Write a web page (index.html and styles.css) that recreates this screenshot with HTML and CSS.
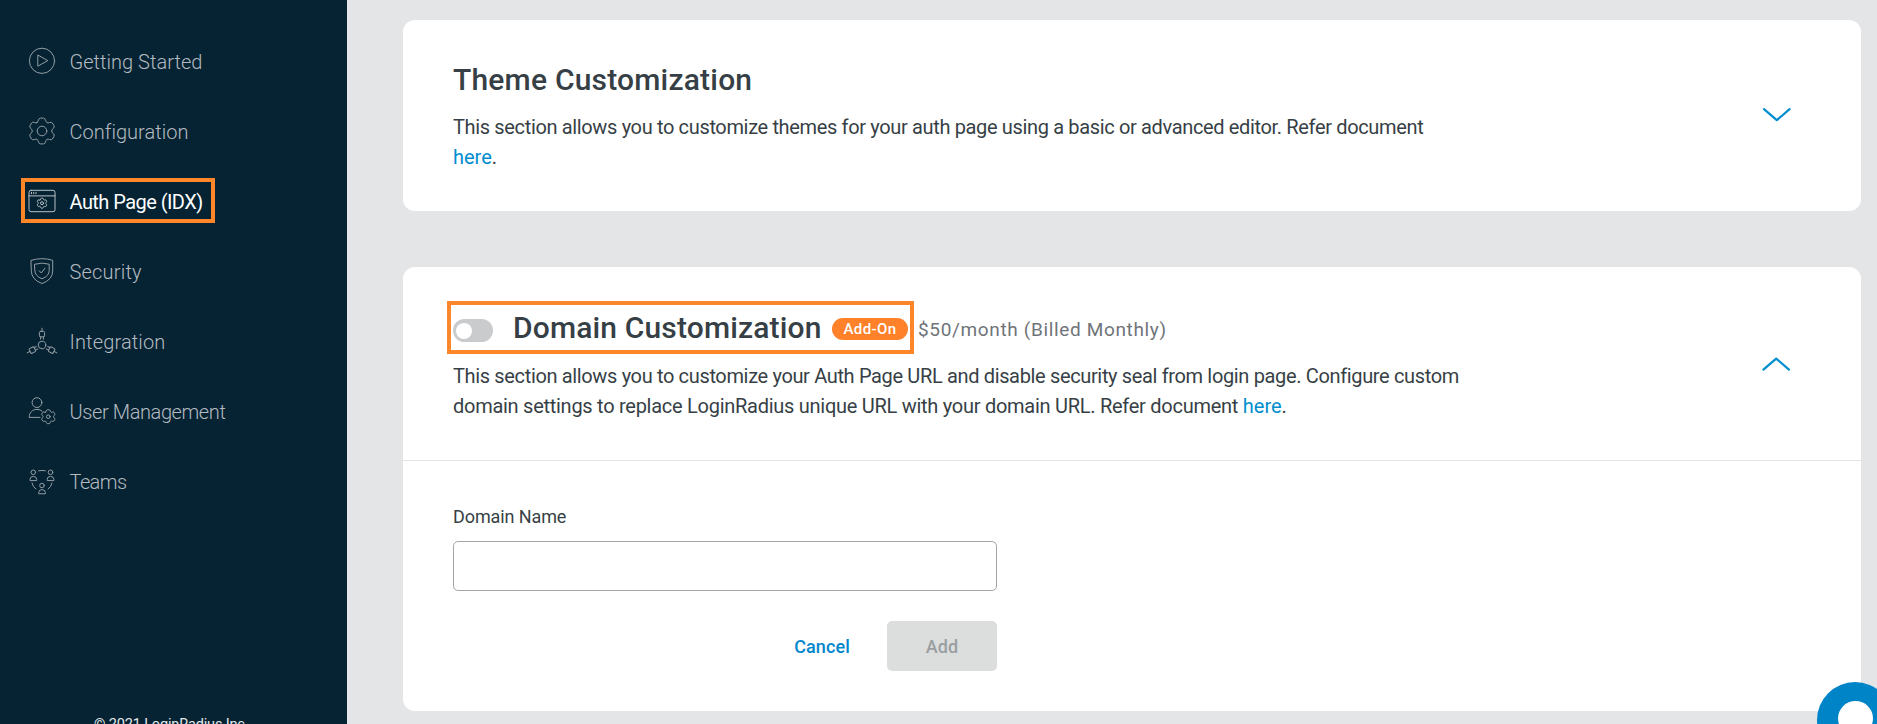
FILE: index.html
```html
<!DOCTYPE html>
<html lang="en">
<head>
<meta charset="utf-8">
<title>Auth Page (IDX)</title>
<link rel="stylesheet" href="styles.css">
</head>
<body>
<svg class="defs" width="0" height="0" aria-hidden="true">
  <symbol id="gear" viewBox="-13 -13 26 26" overflow="visible">
    <path vector-effect="non-scaling-stroke" d="M-5-8.3Q-4.1-8.9-3.6-10.8Q-3-12.9-1.6-12.9H1.6Q3-12.9 3.6-10.8Q4.1-8.9 5-8.3Q6-7.8 7.6-8.5Q9.7-9.3 10.4-8L12-5.3Q12.7-4 11.2-2.5Q9.7-1.1 9.7 0Q9.7 1.1 11.2 2.5Q12.7 4 12 5.3L10.4 8Q9.7 9.3 7.6 8.5Q6 7.8 5 8.3Q4.1 8.9 3.6 10.8Q3 12.9 1.6 12.9H-1.6Q-3 12.9-3.6 10.8Q-4.1 8.9-5 8.3Q-6 7.8-7.6 8.5Q-9.7 9.3-10.4 8L-12 5.3Q-12.7 4-11.2 2.5Q-9.7 1.1-9.7 0Q-9.7-1.1-11.2-2.5Q-12.7-4-12-5.3L-10.4-8Q-9.7-9.3-7.6-8.5Q-6-7.8-5-8.3Z"/>
  </symbol>
</svg>
<div class="app">
  <aside class="sidebar">
    <nav class="nav">
      <a class="nav-item"><svg class="icon" viewBox="0 0 32 32"><circle cx="16" cy="15.8" r="12.6"/><path d="M11.8 10.4v10.8l9.7-5.4z"/></svg><span class="t-start">Getting Started</span></a>
      <a class="nav-item"><svg class="icon" viewBox="0 0 32 32"><use href="#gear" x="3" y="3" width="26" height="26"/><circle cx="16" cy="16" r="4.8"/></svg><span class="t-conf">Configuration</span></a>
      <a class="nav-item active"><svg class="icon" viewBox="0 0 32 32"><rect x="3" y="5.3" width="26" height="21.4" rx="2"/><path d="M3 10.9h26M5.5 7.3v1.4M7.7 7.3v1.4M10 7.3v1.4"/><use href="#gear" x="11" y="13.2" width="10" height="10"/><circle cx="16" cy="18.2" r="1.5"/></svg><span class="t-auth">Auth Page (IDX)</span></a>
      <a class="nav-item"><svg class="icon" viewBox="0 0 32 32"><path d="M5.3 5.3Q16 2 26.7 5.3V16Q26.7 24.5 16 28.6Q5.3 24.5 5.3 16Z"/><path d="M8.8 9.2Q16 7 23.2 9.2V15.5Q23.2 21 16 23.8Q8.8 21 8.8 15.5Z"/><path d="M13.2 15.8l2.1 2.2 3.6-4.8"/></svg><span class="t-sec">Security</span></a>
      <a class="nav-item"><svg class="icon" viewBox="0 0 32 32"><circle cx="16" cy="20" r="3.8"/><g id="plug"><rect x="13.4" y="6.4" width="5.2" height="5.4" rx="1"/><path d="M16 3.2v3.2M14.6 11.8v2.4M17.4 11.8v2.4"/></g><use href="#plug" transform="rotate(118 16 20)"/><use href="#plug" transform="rotate(-118 16 20)"/></svg><span class="t-int">Integration</span></a>
      <a class="nav-item"><svg class="icon" viewBox="0 0 32 32"><circle cx="11" cy="7.6" r="4.9"/><path d="M14 22.4H3.2C3.2 17.6 6.4 14.4 11 14.4q3 0 5 1.6"/><use href="#gear" x="15.3" y="14.7" width="14" height="14"/><circle cx="22.3" cy="21.7" r="1.8"/></svg><span class="t-user">User Management</span></a>
      <a class="nav-item"><svg class="icon" viewBox="0 0 32 32"><g id="person"><circle cx="7.3" cy="7.3" r="2.3"/><path d="M4 15.2v-.8q0-3 3.3-3t3.4 3v.8z"/></g><use href="#person" x="17.2"/><use href="#person" x="8.7" y="13.2"/><path d="M12.6 5.8q3.4-.8 6.8 0M6 18q1 4 3.8 6M26 18q-1 4-3.8 6"/></svg><span class="t-team">Teams</span></a>
    </nav>
    <div class="copyright">© 2021 LoginRadius Inc.</div>
    <div class="outline outline-nav"></div>
  </aside>
  <main class="main">
    <section class="card card-theme">
      <div class="intro">
        <h2 class="title title-theme">Theme Customization</h2>
        <p class="desc desc-theme">This section allows you to customize themes for your auth page using a basic or advanced editor. Refer document<br><a class="link">here</a>.</p>
      </div>
      <svg class="chevron chevron-down" viewBox="0 0 28 14"><path d="M1 1.2l12.8 11L26.6 1.2"/></svg>
    </section>
    <section class="card">
      <header class="card-head">
        <div class="intro">
          <div class="title-row">
            <span class="toggle"><span class="knob"></span></span>
            <h2 class="title title-domain">Domain Customization</h2>
            <span class="badge">Add-On</span>
            <span class="price">$50/month (Billed Monthly)</span>
            <span class="outline outline-title"></span>
          </div>
          <p class="desc desc-domain"><span class="line-a">This section allows you to customize your Auth Page URL and disable security seal from login page. Configure custom</span><br><span class="line-b">domain settings to replace LoginRadius unique URL with your domain URL. Refer document <a class="link">here</a>.</span></p>
        </div>
        <svg class="chevron chevron-up" viewBox="0 0 28 14"><path d="M.4 12.6L13.2 1.6 26 12.6"/></svg>
      </header>
      <form class="form">
        <label class="label" for="domain">Domain Name</label>
        <input class="input" id="domain" type="text">
        <div class="actions">
          <button class="btn-cancel" type="button">Cancel</button>
          <button class="btn-add" type="button" disabled>Add</button>
        </div>
      </form>
    </section>
  </main>
  <div class="chat"><span class="chat-dot"></span></div>
</div>
</body>
</html>
```
FILE: styles.css
```css
* { box-sizing: border-box; }
html, body { margin: 0; height: 724px; overflow: hidden; }
body { font-family: Roboto, "Liberation Sans", sans-serif; color: #373f46; background: #e4e5e7; }
h2, p { margin: 0; }
.defs { position: absolute; }
.app { position: relative; display: flex; width: 1877px; height: 724px; overflow: hidden; }

.sidebar { position: relative; display: flex; flex-direction: column; flex: none; width: 347px; padding-top: 27px; background: #052333; }
.nav-item { display: flex; align-items: center; gap: 11.5px; height: 70px; padding-left: 26px; font-size: 20px; line-height: 30px; font-weight: 300; color: #b4bac0; white-space: nowrap; }
.nav-item.active { color: #fff; font-weight: 400; }
.t-start, .t-conf { letter-spacing: 0.03px; }
.t-int { letter-spacing: 0.14px; }
.t-auth { letter-spacing: -0.55px; }
.t-sec { letter-spacing: 0.2px; }
.t-user { letter-spacing: -0.4px; }
.t-team { letter-spacing: -0.6px; }
.icon { flex: none; width: 32px; height: 32px; margin-top: -2px; fill: none; stroke: #939da4; stroke-width: 1; stroke-linecap: round; stroke-linejoin: round; overflow: visible; }
.active .icon { stroke: #b9c1c6; }
.copyright { margin: 198px 0 0 94px; font-size: 14.5px; line-height: 20px; letter-spacing: -0.15px; color: #e4e8ea; white-space: nowrap; }
.outline { position: absolute; border: 4px solid #ff8629; pointer-events: none; }
.outline-nav { left: 21px; top: 178px; width: 194px; height: 45px; }

.main { display: flex; flex-direction: column; gap: 56px; flex: 1; padding: 20px 16px 0 56px; }
.card { flex: none; height: 444px; border-radius: 12px; background: #fff; }
.card-theme { display: flex; justify-content: space-between; height: 191px; padding: 42px 70px 0 50px; }
.card-head { display: flex; justify-content: space-between; height: 194px; padding: 43px 70px 0 50px; border-bottom: 1px solid #e2e4e6; }
.intro { white-space: nowrap; }
.title { font-size: 30px; line-height: 36px; font-weight: 500; letter-spacing: 0.2px; }
.desc { margin-top: 14px; font-size: 20px; line-height: 30px; letter-spacing: -0.35px; }
.desc-domain { margin-top: 15px; }
.line-b { letter-spacing: -0.27px; }
.link { color: #008ecf; letter-spacing: 0; }
.chevron { flex: none; width: 28px; height: 14px; fill: none; stroke: #008ecf; stroke-width: 2.2; stroke-linecap: round; stroke-linejoin: round; overflow: visible; }
.chevron-down { margin-top: 46px; }
.chevron-up { margin-top: 47px; }

.title-row { position: relative; display: flex; align-items: center; height: 36px; }
.toggle { display: flex; align-items: center; width: 40px; height: 23px; margin: 5px 20px 0 0; padding-left: 3px; border-radius: 12px; background: #cacbcd; }
.knob { width: 16px; height: 16px; border-radius: 50%; background: #fff; }
.title-domain { width: 319px; letter-spacing: 0.15px; }
.badge { width: 76px; height: 22px; margin-top: 2px; border-radius: 11px; background: #ff8129; color: #fff; font-size: 15px; line-height: 23px; font-weight: 500; letter-spacing: 0.4px; text-align: center; }
.price { margin: 4px 0 0 10px; font-size: 19px; line-height: 30px; letter-spacing: 0.65px; color: #6f7479; }
.outline-title { left: -6px; top: -9px; width: 467px; height: 53px; }

.form { width: 594px; padding: 44px 0 0 50px; }
.label { display: block; font-size: 18px; line-height: 24px; letter-spacing: -0.1px; }
.input { display: block; width: 544px; height: 50px; margin-top: 12px; border: 1px solid #a2a6a9; border-radius: 5px; background: #fff; }
.actions { display: flex; justify-content: flex-end; gap: 37px; margin-top: 30px; }
.btn-cancel, .btn-add { height: 50px; padding: 0; border: 0; font: 500 18px/51px Roboto, sans-serif; letter-spacing: 0.12px; }
.btn-cancel { background: none; color: #0086cc; }
.btn-add { width: 110px; border-radius: 5px; background: #dcdedd; color: #9a9ea1; }

.chat { position: absolute; left: 1817px; top: 682px; width: 76px; height: 76px; border-radius: 50%; background: #0084c8; }
.chat-dot { position: absolute; left: 20.5px; top: 19px; width: 35px; height: 35px; border-radius: 50%; background: #fff; }
```
